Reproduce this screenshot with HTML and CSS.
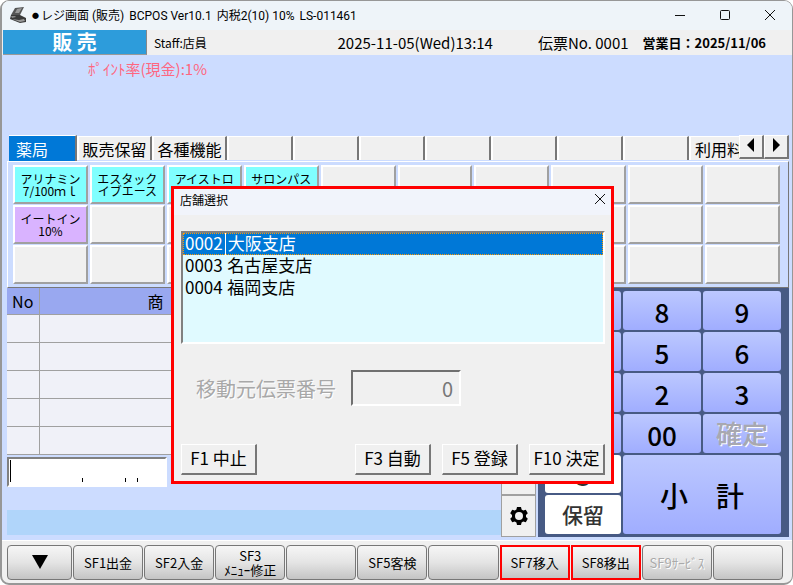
FILE: index.html
```html
<!DOCTYPE html>
<html lang="ja">
<head>
  <meta charset="UTF-8">
  <meta name="viewport" content="width=device-width, initial-scale=1.0">
  <title>レジ画面 (販売)</title>
  <link rel="stylesheet" href="styles.css">
</head>
<body>
  <div class="window">
    <header class="titlebar">
      <svg class="app-icon" width="18" height="18" viewBox="0 0 18 18">
        <path d="M6 1 L15 0 L11 8 L2 8 Z" fill="#555"/>
        <path d="M8 2 L13 1 L10 6 L6 6 Z" fill="#999"/>
        <path d="M2 8 L11 8 L17 11 L17 15 L11 16 L1 12 Z" fill="#3a3a3a"/>
        <path d="M3 12 L10 13 L15 12 L16 14 L11 15 Z" fill="#999"/>
        <path d="M2 9 L6 9 L7 10 L3 11 Z" fill="#888"/>
      </svg>
      <div class="titlebar-text">
        <span class="dot">●</span>
        <span>レジ画面 (販売)</span>
        <span>BCPOS Ver10.1</span>
        <span>内税2(10) 10%</span>
        <span>LS-011461</span>
      </div>
      <div class="window-buttons">
        <button aria-label="最小化"><svg width="12" height="12" viewBox="0 0 12 12"><path d="M1 6.5H11"/></svg></button>
        <button aria-label="最大化"><svg width="12" height="12" viewBox="0 0 12 12"><rect x="1.5" y="1.5" width="9" height="9" rx="1"/></svg></button>
        <button aria-label="閉じる"><svg width="12" height="12" viewBox="0 0 12 12"><path d="M1 1L11 11M11 1L1 11"/></svg></button>
      </div>
    </header>

    <div class="statusbar">
      <div class="mode">販 売</div>
      <span class="staff">Staff:店員</span>
      <span class="datetime">2025-11-05(Wed)13:14</span>
      <span class="slip">伝票No. 0001</span>
      <span class="bizday">営業日：2025/11/06</span>
    </div>

    <main class="main">
      <p class="point">ﾎﾟｲﾝﾄ率(現金):1%</p>

      <div class="tabs">
        <button class="tab active">薬局</button>
        <button class="tab wide">販売保留</button>
        <button class="tab wide">各種機能</button>
        <button class="tab"></button>
        <button class="tab"></button>
        <button class="tab"></button>
        <button class="tab"></button>
        <button class="tab"></button>
        <button class="tab"></button>
        <button class="tab"></button>
        <button class="tab last">利用料</button>
        <div class="tab-scroll">
          <button aria-label="前へ"><svg width="8" height="14" viewBox="0 0 8 14"><path d="M7 0V14L0 7Z"/></svg></button>
          <button aria-label="次へ"><svg width="8" height="14" viewBox="0 0 8 14"><path d="M1 0V14L8 7Z"/></svg></button>
        </div>
      </div>

      <div class="presets">
        <button class="cyan">アリナミン<br>7/100ｍｌ</button>
        <button class="cyan">エスタック<br>イブエース</button>
        <button class="cyan">アイストロ<br>ーチ</button>
        <button class="cyan">サロンパス<br>３０</button>
        <button></button><button></button><button></button><button></button><button></button><button></button>
        <button class="purple">イートイン<br>10%</button>
        <button></button><button></button><button></button><button></button><button></button><button></button><button></button><button></button><button></button>
        <button></button><button></button><button></button><button></button><button></button><button></button><button></button><button></button><button></button><button></button>
      </div>

      <div class="work">
        <div class="sales">
          <table class="items">
            <thead>
              <tr><th class="no">No</th><th class="name">商</th></tr>
            </thead>
            <tbody>
              <tr><td></td><td></td></tr>
              <tr><td></td><td></td></tr>
              <tr><td></td><td></td></tr>
              <tr><td></td><td></td></tr>
              <tr><td></td><td></td></tr>
            </tbody>
          </table>
          <div class="entry">
            <input type="text" class="entry-input" aria-label="入力">
            <svg class="entry-marks" width="140" height="27" viewBox="0 0 140 27"><path d="M1.5 2V24M73.5 20V24M116.5 20V24M128.5 20V24"/></svg>
          </div>
          <div class="message"></div>
        </div>

        <div class="side">
          <button class="side-top" aria-label="メニュー"></button>
          <button class="gear" aria-label="設定">
            <svg width="18" height="18" viewBox="0 0 18 18">
              <path fill-rule="evenodd" d="M7 0H11L11.6 2.6L13.2 3.5L15.8 2.8L17.8 6.2L16 8V10L17.8 11.8L15.8 15.2L13.2 14.5L11.6 15.4L11 18H7L6.4 15.4L4.8 14.5L2.2 15.2L.2 11.8L2 10V8L.2 6.2L2.2 2.8L4.8 3.5L6.4 2.6ZM9 5A4 4 0 1 0 9 13A4 4 0 1 0 9 5Z"/>
            </svg>
          </button>
        </div>

        <div class="keypad">
          <button>7</button><button>8</button><button>9</button>
          <button>4</button><button>5</button><button>6</button>
          <button>1</button><button>2</button><button>3</button>
          <button>0</button><button>00</button><button class="fix" disabled>確定</button>
          <button class="white big">S</button>
          <button class="subtotal">小　計</button>
          <button class="white">保留</button>
        </div>
      </div>
    </main>

    <footer class="fkeys">
      <button class="menu" aria-label="メニュー"><svg width="16" height="14" viewBox="0 0 16 14"><path d="M0 0H16L8 14Z"/></svg></button>
      <button>SF1出金</button>
      <button>SF2入金</button>
      <button>SF3<br>ﾒﾆｭｰ修正</button>
      <button></button>
      <button>SF5客検</button>
      <button></button>
      <button class="marked">SF7移入</button>
      <button class="marked">SF8移出</button>
      <button disabled>SF9ｻｰﾋﾞｽ</button>
      <button></button>
    </footer>

    <section class="dialog" role="dialog" aria-labelledby="dialog-title">
      <div class="dialog-title">
        <span id="dialog-title">店舗選択</span>
        <button aria-label="閉じる"><svg width="12" height="12" viewBox="0 0 12 12"><path d="M1 1L11 11M11 1L1 11"/></svg></button>
      </div>
      <div class="dialog-body">
        <div class="list">
          <table class="stores">
            <tr class="selected"><td>0002</td><td>大阪支店</td></tr>
            <tr><td>0003</td><td>名古屋支店</td></tr>
            <tr><td>0004</td><td>福岡支店</td></tr>
          </table>
        </div>
        <div class="slip-row">
          <label for="slip-no">移動元伝票番号</label>
          <input type="text" id="slip-no" value="0" disabled>
        </div>
        <div class="dialog-buttons">
          <button class="cancel">F1 中止</button>
          <button>F3 自動</button>
          <button>F5 登録</button>
          <button>F10 決定</button>
        </div>
      </div>
    </section>
  </div>
</body>
</html>
```
FILE: styles.css
```css
* {
  box-sizing: border-box;
}

body {
  margin: 0;
  font-family: "Noto Sans CJK JP", sans-serif;
  color: #000;
  background: #fff;
}

button {
  margin: 0;
  padding: 0;
  font-family: inherit;
  color: inherit;
  background: #f0f0f0;
  border: none;
  border-radius: 0;
}

.window {
  position: relative;
  display: flex;
  flex-direction: column;
  min-height: 100vh;
  border: 1px solid #979797;
  border-left-width: 2px;
  border-bottom-width: 2px;
  border-radius: 9px;
  overflow: hidden;
  background: #f0f0f0;
}

/* Title bar */
.titlebar {
  display: flex;
  align-items: center;
  height: 29px;
  padding-left: 7px;
  background: #eef4f9;
}
.titlebar-text {
  display: flex;
  align-items: center;
  gap: 5px;
  margin-left: 5px;
  font-family: Roboto, "Noto Sans CJK JP", sans-serif;
  font-size: 12px;
  line-height: 26px;
  white-space: nowrap;
}
.titlebar-text .dot {
  margin-right: -3px;
  font-size: 7px;
}
.window-buttons {
  display: flex;
  margin-left: auto;
}
.window-buttons button {
  display: flex;
  align-items: center;
  justify-content: center;
  width: 45px;
  height: 28px;
  padding-bottom: 2px;
  background: none;
}
.window-buttons svg,
.dialog-title svg {
  fill: none;
  stroke: #111;
}

/* Status bar */
.statusbar {
  display: flex;
  align-items: center;
  height: 25px;
  padding-left: 1px;
  line-height: 24px;
  white-space: nowrap;
}
.mode {
  width: 144px;
  height: 25px;
  color: #fff;
  font-size: 20px;
  font-weight: bold;
  text-align: center;
  background: #2d9cdb;
  border-right: 1px solid #888;
  border-bottom: 1px solid #999;
}
.staff {
  margin-left: 7px;
  font-size: 12px;
}
.datetime {
  margin-left: auto;
  font-size: 15px;
}
.slip {
  margin-left: 45px;
  font-size: 15px;
}
.bizday {
  margin-left: 14px;
  margin-right: 26px;
  font-size: 13px;
  font-weight: bold;
}

/* Main area */
.main {
  flex: 1;
  padding: 0 3px 0 5px;
  background: #ccdcff;
}
.point {
  height: 80px;
  margin: 0;
  padding: 4px 0 0 81px;
  color: #ff6680;
  font-size: 15px;
  line-height: 20px;
}

/* Category tabs */
.tabs {
  position: relative;
  display: flex;
  height: 26px;
  padding-left: 2px;
}
.tab {
  flex: 0 0 66px;
  height: 24px;
  margin-top: 1px;
  font-size: 16px;
  line-height: 24px;
  white-space: nowrap;
  border-top: 1px solid #fff;
  border-left: 2px solid #fff;
  border-right: 2px solid #777;
}
.tab.wide {
  flex-basis: 75px;
}
.tab.active {
  flex-basis: 68px;
  height: 26px;
  margin-top: 0;
  padding-right: 20px;
  color: #fff;
  line-height: 22px;
  background: #0078d7;
  border-left: none;
}
.tab.last {
  flex: 1;
  padding-left: 4px;
  text-align: left;
  border-right: none;
}
.tab-scroll {
  position: absolute;
  top: 0;
  right: 0;
  display: flex;
}
.tab-scroll button {
  width: 25px;
  height: 24px;
  border: 1px solid #fff;
  border-right: 2px solid #777;
  border-bottom: 2px solid #777;
}

/* Preset product buttons */
.presets {
  display: grid;
  grid-template-columns: repeat(10, 1fr);
  grid-auto-rows: 39px;
  gap: 1px 2px;
  padding: 3px 8px 3px 5px;
  border-top: 1px solid #fff;
  border-left: 1px solid #fff;
  border-right: 1px solid #777;
  border-bottom: 1px solid #777;
}
.presets button {
  overflow: hidden;
  font-size: 12px;
  line-height: 12px;
  white-space: nowrap;
  border: 2px solid #fff;
  border-right-color: #a0a0a0;
  border-bottom-color: #a0a0a0;
}
.presets .cyan {
  background: #80ffff;
}
.presets .purple {
  background: #d9b3ff;
}

/* Item list, side buttons and keypad */
.work {
  display: flex;
}
.sales {
  flex: 1;
}
.items {
  width: 100%;
  border-collapse: collapse;
  table-layout: fixed;
}
.items th {
  height: 26px;
  padding: 0;
  font-size: 16px;
  font-weight: normal;
  line-height: 24px;
  background: #99a8f0;
  border-right: 1px solid #a0a0a0;
  border-bottom: 1px solid #a0a0a0;
}
.items .no {
  width: 32px;
}
.items .name {
  padding-left: 108px;
  text-align: left;
}
.items td {
  height: 28px;
  padding: 0;
  background: #f0f1f8;
  border-right: 1px solid #a0a0a0;
  border-bottom: 1px solid #a0a0a0;
}
.entry {
  position: relative;
  width: 160px;
  height: 30px;
  margin-top: 2px;
}
.entry-input {
  display: block;
  width: 100%;
  height: 30px;
  border: 2px solid #fff;
  border-top-color: #808080;
  border-left-color: #808080;
  background: #fff;
}
.entry-marks {
  position: absolute;
  top: 1px;
  left: 2px;
  fill: none;
  stroke: #000;
}
.message {
  height: 25px;
  margin-top: 23px;
  background: #b0d5fa;
}
.side {
  display: flex;
  flex-direction: column;
  width: 35px;
  margin-right: 2px;
}
.side-top {
  flex: 1;
  border: 1px solid #a0a0a0;
}
.gear {
  height: 42px;
  padding-top: 4px;
  border: 1px solid #a0a0a0;
}
.keypad {
  display: grid;
  grid-template-columns: 76px 78px 78px;
  grid-template-rows: repeat(4, 39px) 38px 39px;
  gap: 2px;
  padding: 3px 8px 3px 7px;
  background: #475a84;
}
.keypad button {
  padding-top: 2px;
  font-size: 26px;
  font-weight: 500;
  line-height: 36px;
  background: linear-gradient(#bcc8ff, #a0adff);
  border-radius: 3px;
}
.keypad .fix {
  padding: 0 0 2px;
  color: #a8a8b0;
  text-shadow: 1px 1px #fff;
}
.keypad .white {
  padding: 0 0 2px;
  color: #333;
  font-size: 21px;
  background: #fff;
}
.keypad .white.big {
  padding: 2px 0 0;
  font-size: 26px;
}
.keypad .subtotal {
  grid-column: 2 / 4;
  grid-row: 5 / 7;
  padding: 0;
  font-size: 28px;
}

/* Function keys */
.fkeys {
  display: grid;
  grid-template-columns: 65px repeat(10, 1fr);
  gap: 1px;
  height: 43px;
  padding: 4px 9px 3px 5px;
  border-top: 1px solid #fff;
}
.fkeys button {
  font-size: 13px;
  line-height: 14px;
  white-space: nowrap;
  background: linear-gradient(#f6f6f6, #e4e4e4 50%, #c4c4c4);
  border: 1px solid #777;
  border-radius: 4px;
}
.fkeys button:disabled {
  color: #aaa;
  text-shadow: 1px 1px #fff;
}
.fkeys .marked {
  border-radius: 0;
  border: 2px solid #f00;
}

/* Store selection dialog */
.dialog {
  position: absolute;
  top: 185px;
  left: 169px;
  width: 443px;
  border: 3px solid #f00;
  background: #f0f0f0;
}
.dialog-title {
  display: flex;
  align-items: center;
  justify-content: space-between;
  height: 26px;
  padding: 0 1px 6px 6px;
  font-size: 12px;
  background: #f1f4fb;
}
.dialog-title button {
  display: flex;
  align-items: center;
  justify-content: center;
  width: 20px;
  height: 20px;
  background: none;
}
.dialog-body {
  padding: 16px 6px 6px 7px;
}
.list {
  height: 113px;
  border: 2px solid #fff;
  border-top-color: #808080;
  border-left-color: #808080;
  background: #e0faff;
}
.stores {
  width: 100%;
  border-collapse: collapse;
}
.stores td {
  height: 22px;
  padding: 0 2px 2px;
  font-size: 17px;
  line-height: 20px;
}
.stores td:first-child {
  width: 40px;
}
.stores .selected {
  color: #fff;
  background: #0078d7;
  outline: 1px dotted #f90;
  outline-offset: -1px;
}
.stores .selected td:first-child {
  border-right: 1px solid #fff;
}
.slip-row {
  display: flex;
  align-items: center;
  margin-top: 26px;
  padding-left: 15px;
}
.slip-row label {
  color: #a8a8a8;
  font-size: 20px;
  text-shadow: 1px 1px #fff;
}
.slip-row input {
  width: 110px;
  height: 36px;
  margin-left: 15px;
  padding: 0 6px;
  color: #777;
  font-family: inherit;
  font-size: 20px;
  text-align: right;
  background: #f0f0f0;
  border: 2px solid #fff;
  border-top-color: #707070;
  border-left-color: #707070;
}
.dialog-buttons {
  display: flex;
  gap: 11px;
  margin-top: 38px;
}
.dialog-buttons button {
  width: 76px;
  height: 31px;
  padding-bottom: 2px;
  font-size: 17px;
  line-height: 24px;
  white-space: nowrap;
  border: 1px solid #fff;
  border-right: 2px solid #777;
  border-bottom: 2px solid #777;
}
.dialog-buttons .cancel {
  margin-right: auto;
}
```
